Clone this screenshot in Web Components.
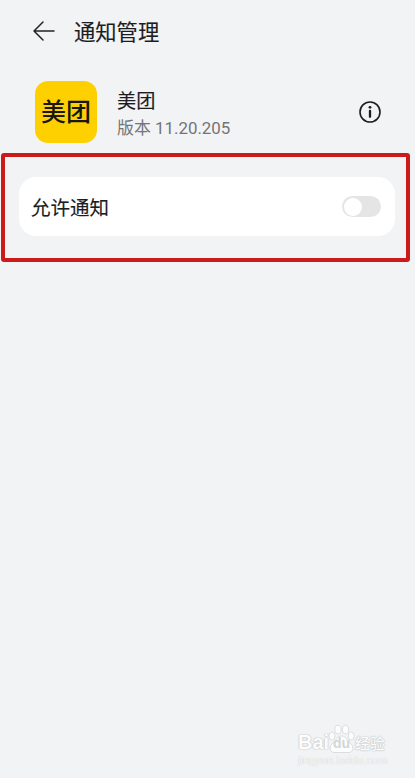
<!DOCTYPE html>
<html lang="zh-CN">
<head>
<meta charset="utf-8">
<meta name="viewport" content="width=device-width, initial-scale=1">
<title>通知管理</title>
<style>
    body {
        --page: #f2f3f5;
        --text: #1c1d1f;
        --muted: #737577;
        --highlight: #cc1a1b;
        margin: 0;
        height: 778px;
        overflow: hidden;
        background-color: var(--page);
        color: var(--text);
        font-family: Roboto, 'Noto Sans CJK SC', sans-serif;
    }
</style>
</head>
<body>
<notification-page>
    <page-header>通知管理</page-header>
    <app-summary>
        <app-logo slot="logo">美团</app-logo>
        <span slot="name">美团</span>
        <span slot="version">版本 11.20.205</span>
    </app-summary>
    <highlight-frame>
        <setting-row>允许通知<toggle-switch slot="control"></toggle-switch></setting-row>
    </highlight-frame>
    <site-watermark slot="overlay"></site-watermark>
</notification-page>

<script>
const define = (name, html) => {
    const template = document.createElement('template');
    template.innerHTML = html;
    customElements.define(name, class extends HTMLElement {
        constructor() {
            super();
            this.attachShadow({mode: 'open'}).append(template.content.cloneNode(true));
        }
    });
};

define('notification-page', `
<style>
    :host {
        display: block;
        position: relative;
        height: 778px;
    }

    main {
        display: flex;
        flex-direction: column;
    }
</style>
<main><slot></slot></main>
<slot name="overlay"></slot>
`);

define('page-header', `
<style>
    :host {
        display: flex;
        align-items: center;
        box-sizing: border-box;
        height: 64px;
        padding-left: 32px;
        padding-top: 2px;
        gap: 18px;
    }

    h1 {
        margin: 0;
        font-size: 21.3px;
        font-weight: 400;
        line-height: 30px;
        -webkit-text-stroke: .15px var(--text);
    }

    svg {
        width: 24px;
        height: 24px;
        margin-top: -5px;
    }
</style>
<svg viewBox="0 0 24 24" fill="none" stroke="#222325" stroke-width="1.5" stroke-linecap="round" stroke-linejoin="round">
    <path d="M22 12H2M11 3L2 12l9 9"/>
</svg>
<h1><slot></slot></h1>
`);

define('app-logo', `
<style>
    :host {
        display: flex;
        align-items: center;
        justify-content: center;
        box-sizing: border-box;
        width: 62px;
        height: 62px;
        padding-top: 2px;
        border-radius: 13px;
        background-color: #ffd000;
        color: #19170e;
        font-size: 25px;
        font-weight: 500;
        line-height: 30px;
    }
</style>
<slot></slot>
`);

define('app-summary', `
<style>
    :host {
        display: flex;
        align-items: center;
        height: 62px;
        padding: 17px 34px 10px 35px;
    }

    .info {
        flex: 1;
        padding-left: 20px;
        padding-top: 5px;
    }

    .name {
        font-size: 19.2px;
        line-height: 27px;
        -webkit-text-stroke: .15px var(--text);
    }

    .version {
        color: var(--muted);
        font-size: 16.9px;
        line-height: 26px;
    }

    svg {
        width: 22px;
        height: 22px;
    }
</style>
<slot name="logo"></slot>
<div class="info">
    <div class="name"><slot name="name"></slot></div>
    <div class="version"><slot name="version"></slot></div>
</div>
<svg viewBox="0 0 22 22">
    <circle cx="11" cy="11" r="10" fill="none" stroke="#1c1d1f" stroke-width="1.6"/>
    <circle cx="11" cy="6.3" r="1.4" fill="#1c1d1f"/>
    <path d="M11 9.8v6" stroke="#1c1d1f" stroke-width="2.3" stroke-linecap="round"/>
</svg>
`);

define('highlight-frame', `
<style>
    :host {
        display: block;
        box-sizing: border-box;
        width: 409px;
        height: 109px;
        margin-left: 1px;
        padding: 20px 11px 0 14px;
        border: 4px solid var(--highlight);
        border-radius: 3px;
    }
</style>
<slot></slot>
`);

define('setting-row', `
<style>
    :host {
        display: flex;
        align-items: center;
        justify-content: space-between;
        box-sizing: border-box;
        height: 59px;
        padding: 0 14px 0 12px;
        border-radius: 17px;
        background-color: #fff;
    }

    .label {
        padding-top: 4px;
        font-size: 19.5px;
        line-height: 28px;
        -webkit-text-stroke: .15px var(--text);
    }
</style>
<div class="label"><slot></slot></div>
<slot name="control"></slot>
`);

define('toggle-switch', `
<style>
    :host {
        display: flex;
        box-sizing: border-box;
        width: 39px;
        height: 21px;
        padding: 1.5px;
        border-radius: 11px;
        background-color: #e5e5e6;
    }

    i {
        width: 18px;
        height: 18px;
        border-radius: 50%;
        background-color: #fff;
    }
</style>
<i></i>
`);

define('site-watermark', `
<style>
    /* sits over the bottom right corner of the page */
    :host {
        position: absolute;
        left: 298px;
        top: 723px;
        font-family: 'Liberation Sans', 'Noto Sans CJK SC', sans-serif;
        color: #fcfdfd;
        text-shadow: 0 0 1px #b8bbbe, 0 0 1px #c3c6c8, 0 0 2px #d3d5d7;
    }

    .brand {
        display: flex;
        align-items: flex-end;
        height: 31px;
        font-size: 20px;
        font-weight: 700;
        line-height: 23px;
    }

    .bai {
        width: 30px;
    }

    .paw {
        display: grid;
        width: 27px;
        height: 30px;
    }

    .paw > * {
        grid-area: 1 / 1;
    }

    .paw span {
        align-self: end;
        justify-self: center;
        color: #d3d6d8;
        font-size: 14px;
        line-height: 21px;
        text-shadow: none;
    }

    .cn {
        font-size: 15px;
        font-weight: 500;
        line-height: 20px;
    }

    .url {
        font-size: 11.1px;
        line-height: 13px;
        color: #f6f7f8;
        text-shadow: 0 0 1px #cdd0d2, 0 0 1px #dcdee0;
    }
</style>
<div class="brand">
    <div class="bai">Bai</div>
    <div class="paw">
        <svg width="27" height="30" viewBox="0 0 27 30" fill="#fcfdfd" stroke="#d3d6d8" stroke-width=".8">
            <ellipse cx="4" cy="12" rx="3" ry="4"/>
            <ellipse cx="10" cy="5.5" rx="3.1" ry="4.3"/>
            <ellipse cx="17.5" cy="5.5" rx="3.1" ry="4.3"/>
            <ellipse cx="23.2" cy="12" rx="3" ry="4"/>
            <path d="M13.5 12C8.500 12 9 16 5 19C1 22 1 28 6 28.500H21C26 28 26 22 22 19C18 16 18.500 12 13.500 12Z"/>
        </svg>
        <span>du</span>
    </div>
    <div class="cn">经验</div>
</div>
<div class="url">jingyan.baidu.com</div>
`);
</script>
</body>
</html>
